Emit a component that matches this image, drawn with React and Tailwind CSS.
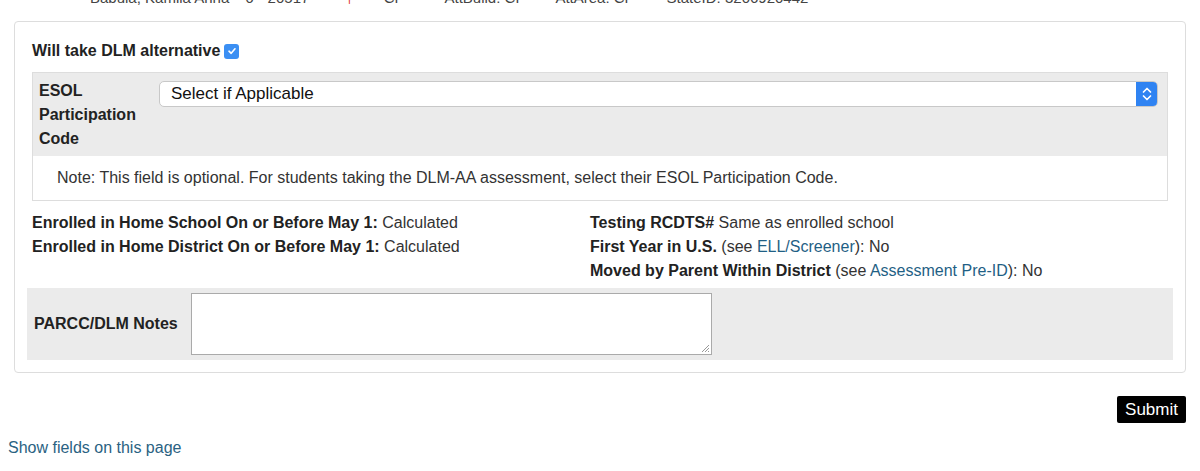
export default function App() {
  const font = { fontFamily: '"Liberation Sans", Arial, Helvetica, sans-serif' };
  return (
    <div className="w-[1200px] h-[471px] bg-white text-[#333] text-[16px] overflow-hidden relative" style={font}>
      {/* cut-off top line */}
      <div className="h-[21px] overflow-hidden relative">
        <div className="flex items-center text-[15px] leading-[18px] -mt-[11px] text-[#444] whitespace-nowrap">
          <span className="ml-[90px]">Babula, Kamila Anna</span>
          <span className="ml-[16px]">6</span>
          <span className="ml-[14px]">20517</span>
          <span className="ml-[36px] text-[#e0312a]">†</span>
          <span className="ml-[30px]">CP</span>
          <span className="ml-[40px]">AttBuild: CP</span>
          <span className="ml-[30px]">AttArea: CP</span>
          <span className="ml-[32px]">StateID: 3206920442</span>
        </div>
      </div>

      {/* panel */}
      <div className="mx-[14px] border border-[#ddd] rounded-[4px] h-[352px] pt-[19px] px-[17px]">
        <div className="flex items-center h-[20px] font-bold text-[16px] text-[#222]">
          Will take DLM alternative
          <span className="ml-[4px] w-[15px] h-[15px] rounded-[3px] bg-[#3b8ff3] flex items-center justify-center">
            <svg width="10" height="10" viewBox="0 0 10 10">
              <path d="M2 5.2 L4.2 7.3 L8 2.8" stroke="white" strokeWidth="1.6" fill="none" strokeLinecap="round" strokeLinejoin="round" />
            </svg>
          </span>
        </div>

        <div className="mt-[11px] border border-[#ddd]">
          <div className="bg-[#ebebeb] flex px-[6px] pt-[6px] pb-[4px] h-[83px]">
            <div className="w-[120px] font-bold text-[16px] leading-[24px] text-[#222]">
              ESOL<br />Participation<br />Code
            </div>
            <div className="flex-1 pt-[2px] pr-[3px]">
              <div className="h-[26px] bg-white border border-[#c8c8c8] rounded-[5px] flex items-center justify-between relative overflow-hidden">
                <span className="pl-[11px] text-[17px] text-[#111]">Select if Applicable</span>
                <span className="w-[22px] h-[26px] -mr-px -my-px bg-[#2f83f2] rounded-r-[5px] flex items-center justify-center">
                  <svg width="10" height="16" viewBox="0 0 10 16">
                    <path d="M1.5 6 L5 2.5 L8.5 6" stroke="white" strokeWidth="1.7" fill="none" strokeLinecap="round" strokeLinejoin="round" />
                    <path d="M1.5 10 L5 13.5 L8.5 10" stroke="white" strokeWidth="1.7" fill="none" strokeLinecap="round" strokeLinejoin="round" />
                  </svg>
                </span>
              </div>
            </div>
          </div>
          <div className="h-[44px] flex items-center pl-[24px] text-[16px] text-[#333]">
            Note: This field is optional. For students taking the DLM-AA assessment, select their ESOL Participation Code.
          </div>
        </div>

        <div className="flex mt-[10px] leading-[24px] text-[16px] text-[#333]">
          <div className="w-[558px]">
            <div><b className="text-[#222]">Enrolled in Home School On or Before May 1:</b> Calculated</div>
            <div><b className="text-[#222]">Enrolled in Home District On or Before May 1:</b> Calculated</div>
          </div>
          <div>
            <div><b className="text-[#222]">Testing RCDTS#</b> Same as enrolled school</div>
            <div><b className="text-[#222]">First Year in U.S.</b> (see <span className="text-[#1f5f85]">ELL/Screener</span>): No</div>
            <div><b className="text-[#222]">Moved by Parent Within District</b> (see <span className="text-[#1f5f85]">Assessment Pre-ID</span>): No</div>
          </div>
        </div>

        <div className="-mx-[5px] mt-[5px] bg-[#ebebeb] h-[72px] flex items-center pl-[7px]">
          <div className="w-[157px] font-bold text-[16px] text-[#222]">PARCC/DLM Notes</div>
          <div className="w-[521px] h-[62px] bg-white border border-[#aaa] relative">
            <svg className="absolute right-[1px] bottom-[1px]" width="9" height="9" viewBox="0 0 9 9">
              <path d="M8 1 L1 8 M8 4 L4 8 M8 7 L7 8" stroke="#999" strokeWidth="1" />
            </svg>
          </div>
        </div>
      </div>

      <div className="flex justify-end pr-[14px] mt-[23px]">
        <button className="bg-black text-white text-[17px] h-[27px] px-[8px] rounded-[2px] leading-none">Submit</button>
      </div>

      <div className="mt-[13px] pl-[8px] text-[16px] text-[#2a6282]">Show fields on this page</div>
    </div>
  );
}
